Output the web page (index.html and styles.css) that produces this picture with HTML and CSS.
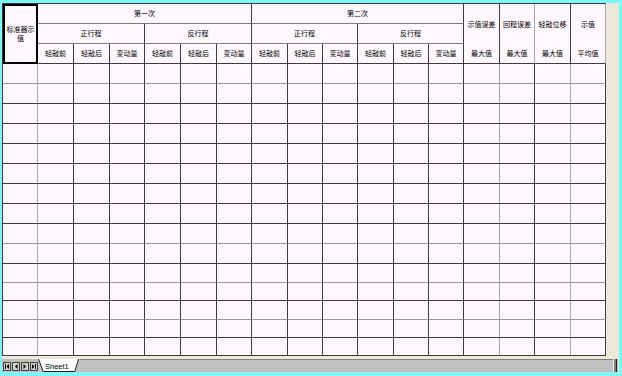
FILE: index.html
```html
<!DOCTYPE html>
<html lang="zh-CN">
<head>
<meta charset="utf-8">
<title>Sheet1</title>
<link rel="stylesheet" href="styles.css">
</head>
<body>
<div class="window">
  <div class="main">
    <div class="sheet">
      <div class="head">
        <div class="c corner">标准器示值</div>
        <div class="c s6 hl">第一次</div>
        <div class="c s6 hl">第二次</div>
        <div class="c tall">示值误差</div>
        <div class="c tall gv">回程误差</div>
        <div class="c tall">轻敲位移</div>
        <div class="c tall gv">示值</div>
        <div class="c s3 hl">正行程</div>
        <div class="c s3 hl">反行程</div>
        <div class="c s3 hl">正行程</div>
        <div class="c s3 hl">反行程</div>
        <div class="c">轻敲前</div>
        <div class="c">轻敲后</div>
        <div class="c">变动量</div>
        <div class="c">轻敲前</div>
        <div class="c">轻敲后</div>
        <div class="c">变动量</div>
        <div class="c">轻敲前</div>
        <div class="c">轻敲后</div>
        <div class="c">变动量</div>
        <div class="c">轻敲前</div>
        <div class="c">轻敲后</div>
        <div class="c">变动量</div>
        <div class="c low">最大值</div>
        <div class="c low gv">最大值</div>
        <div class="c low">最大值</div>
        <div class="c low gv">平均值</div>
      </div>
      <div class="row gl"><span></span><span></span><span></span><span></span><span></span><span></span><span></span><span></span><span></span><span></span><span></span><span></span><span></span><span></span><span></span><span></span><span></span></div>
      <div class="row"><span></span><span></span><span></span><span></span><span></span><span></span><span></span><span></span><span></span><span></span><span></span><span></span><span></span><span></span><span></span><span></span><span></span></div>
      <div class="row"><span></span><span></span><span></span><span></span><span></span><span></span><span></span><span></span><span></span><span></span><span></span><span></span><span></span><span></span><span></span><span></span><span></span></div>
      <div class="row"><span></span><span></span><span></span><span></span><span></span><span></span><span></span><span></span><span></span><span></span><span></span><span></span><span></span><span></span><span></span><span></span><span></span></div>
      <div class="row"><span></span><span></span><span></span><span></span><span></span><span></span><span></span><span></span><span></span><span></span><span></span><span></span><span></span><span></span><span></span><span></span><span></span></div>
      <div class="row"><span></span><span></span><span></span><span></span><span></span><span></span><span></span><span></span><span></span><span></span><span></span><span></span><span></span><span></span><span></span><span></span><span></span></div>
      <div class="row"><span></span><span></span><span></span><span></span><span></span><span></span><span></span><span></span><span></span><span></span><span></span><span></span><span></span><span></span><span></span><span></span><span></span></div>
      <div class="row"><span></span><span></span><span></span><span></span><span></span><span></span><span></span><span></span><span></span><span></span><span></span><span></span><span></span><span></span><span></span><span></span><span></span></div>
      <div class="row gl"><span></span><span></span><span></span><span></span><span></span><span></span><span></span><span></span><span></span><span></span><span></span><span></span><span></span><span></span><span></span><span></span><span></span></div>
      <div class="row"><span></span><span></span><span></span><span></span><span></span><span></span><span></span><span></span><span></span><span></span><span></span><span></span><span></span><span></span><span></span><span></span><span></span></div>
      <div class="row h19 gl"><span></span><span></span><span></span><span></span><span></span><span></span><span></span><span></span><span></span><span></span><span></span><span></span><span></span><span></span><span></span><span></span><span></span></div>
      <div class="row h18"><span></span><span></span><span></span><span></span><span></span><span></span><span></span><span></span><span></span><span></span><span></span><span></span><span></span><span></span><span></span><span></span><span></span></div>
      <div class="row h19 gl"><span></span><span></span><span></span><span></span><span></span><span></span><span></span><span></span><span></span><span></span><span></span><span></span><span></span><span></span><span></span><span></span><span></span></div>
      <div class="row h18"><span></span><span></span><span></span><span></span><span></span><span></span><span></span><span></span><span></span><span></span><span></span><span></span><span></span><span></span><span></span><span></span><span></span></div>
      <div class="row h18"><span></span><span></span><span></span><span></span><span></span><span></span><span></span><span></span><span></span><span></span><span></span><span></span><span></span><span></span><span></span><span></span><span></span></div>
    </div>
    <div class="side"></div>
  </div>
  <div class="strip"></div>
  <div class="tabbar">
    <div class="nav">
      <svg class="btn" width="8" height="9" viewBox="0 0 8 9"><rect x="0.5" y="0.5" width="7" height="8" fill="#d4d0c8" stroke="#404040"/><rect x="2" y="2" width="1" height="5" fill="#000"/><polygon points="6,2 3.5,4.5 6,7" fill="#000"/></svg>
      <svg class="btn" width="8" height="9" viewBox="0 0 8 9"><rect x="0.5" y="0.5" width="7" height="8" fill="#d4d0c8" stroke="#404040"/><polygon points="5.5,2 3,4.5 5.5,7" fill="#000"/></svg>
      <svg class="btn" width="8" height="9" viewBox="0 0 8 9"><rect x="0.5" y="0.5" width="7" height="8" fill="#d4d0c8" stroke="#404040"/><polygon points="2.5,2 5,4.5 2.5,7" fill="#000"/></svg>
      <svg class="btn" width="8" height="9" viewBox="0 0 8 9"><rect x="0.5" y="0.5" width="7" height="8" fill="#d4d0c8" stroke="#404040"/><polygon points="2,2 4.5,4.5 2,7" fill="#000"/><rect x="5" y="2" width="1" height="5" fill="#000"/></svg>
    </div>
    <svg class="tab" width="42" height="13" viewBox="0 0 42 13">
      <polygon points="0,0 41,0 37,12.5 5,12.5" fill="#ffffff"/>
      <polyline points="0.5,0 5.2,12.5 36.8,12.5 40.5,0" fill="none" stroke="#202020" stroke-width="1"/>
      <text x="7" y="9.5" class="tabtext">Sheet1</text>
    </svg>
    <div class="rest"></div>
    <div class="split"></div>
  </div>
</div>
</body>
</html>
```
FILE: styles.css
```css
:root {
  --cols: 35px 36px 36px 35px 36px 36px 35px 36px 35px 35px 36px 35px 35px 36px 35px 36px 35px;
  --line: #3c3c3c;
  --soft: #a8a4a8;
  --hline: #7c7c7c;
  --cell: #fef8fe;
  --beige: #ece9d8;
}

html, body {
  margin: 0;
  padding: 0;
  background: #80f6f6;
}

body {
  width: 622px;
  height: 376px;
  overflow: hidden;
  font-family: "Noto Sans CJK SC", "Noto Sans CJK JP", sans-serif;
}

.window {
  margin: 3px 0 0 2px;
  width: 617px;
  height: 369px;
  display: flex;
  flex-direction: column;
  background: var(--beige);
}

.main {
  display: flex;
  height: 353px;
}

.sheet {
  width: 604px;
  height: 353px;
  box-sizing: border-box;
  border-left: 1px solid var(--line);
  border-top: 1px solid var(--line);
  background: var(--cell);
}

.side {
  flex: 1;
}

.head {
  display: grid;
  grid-template-columns: var(--cols);
  grid-template-rows: 20px 20px 20px;
}

.c {
  box-sizing: border-box;
  border-right: 1px solid var(--line);
  border-bottom: 1px solid var(--line);
  background: var(--cell);
  display: flex;
  align-items: center;
  justify-content: center;
  font-size: 7px;
  line-height: 9px;
  color: #000;
  text-align: center;
  white-space: nowrap;
  overflow: hidden;
}

.corner {
  grid-row: span 3;
  border: 2px solid #000;
  white-space: normal;
  padding: 0 1px;
}

.s6 { grid-column: span 6; }
.s3 { grid-column: span 3; }

.hl {
  border-bottom-color: var(--hline);
}

.tall {
  grid-row: span 2;
  border-bottom: none;
}

.gv {
  border-right-color: var(--soft);
}

.row {
  display: grid;
  grid-template-columns: var(--cols);
  height: 20px;
}

.row.h19 { height: 19px; }
.row.h18 { height: 18px; }

.row > span {
  box-sizing: border-box;
  border-right: 1px solid var(--line);
  border-bottom: 1px solid var(--line);
  background: var(--cell);
}

.row > span:nth-child(1),
.row > span:nth-child(14),
.row > span:nth-child(16) {
  border-right-color: var(--soft);
}

.row.gl > span {
  border-bottom-color: #9a969a;
}

.strip {
  height: 3px;
}

.tabbar {
  height: 13px;
  display: flex;
  background: #c0c0c0;
  margin-right: 1px;
}

.nav {
  display: flex;
  gap: 1px;
  padding: 3px 0 0 1px;
  width: 35px;
}

.btn {
  display: block;
}

.tab {
  display: block;
  flex: none;
}

.tabtext {
  font-family: "Liberation Sans", Arial, sans-serif;
  font-size: 7.5px;
  fill: #000;
}

.rest {
  flex: 1;
  border-top: 1px solid #808080;
}

.split {
  width: 2px;
  border-left: 1px solid #f0f0f0;
  border-right: 1px solid #202020;
  background: #808080;
  margin-right: 1px;
}
```
